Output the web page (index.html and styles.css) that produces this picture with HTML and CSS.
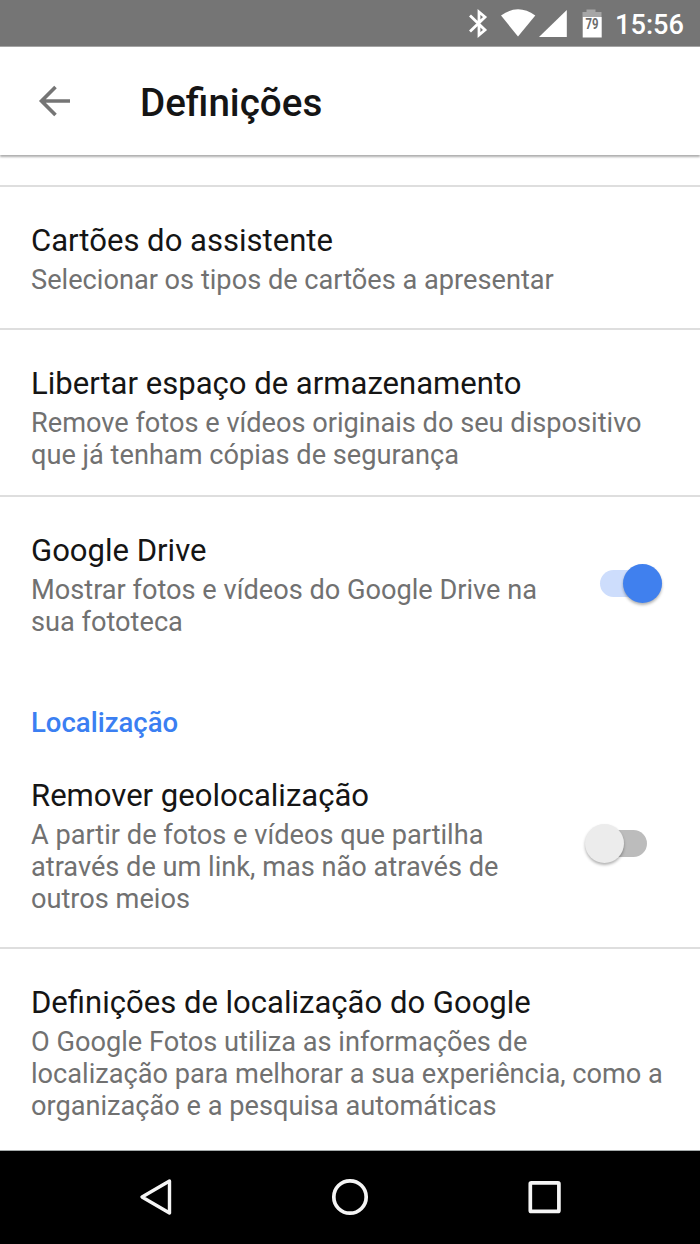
FILE: index.html
```html
<!DOCTYPE html>
<html lang="pt">
<head>
<meta charset="utf-8">
<title>Definições</title>
<link rel="stylesheet" href="styles.css">
</head>
<body>
<div class="screen">
  <div class="status-bar">
    <svg class="status-icons" viewBox="0 0 144 46" width="144" height="46">
      <path d="M3 15.500 18 30 12 35V12L18 17 3 31.500" fill="none" stroke="#fff" stroke-width="2.800"/>
      <path d="M34 15.500Q51 3 68.300 15.500L51 36.500Z" fill="#fff"/>
      <path d="M99.800 10V37H72Z" fill="#fff"/>
      <path d="M119.500 9.500h9v2.500h6v5h-19v-5h4z" fill="#a6a6a6"/>
      <path d="M115.700 17h19v20.500h-19z" fill="#fff"/>
      <text class="battery-level" x="125" y="28.500" text-anchor="middle" textLength="13" lengthAdjust="spacingAndGlyphs">79</text>
    </svg>
    <span class="clock">15:56</span>
  </div>
  <header class="toolbar">
    <svg class="back" viewBox="0 0 32 32" width="32" height="32">
      <path d="M32 16H3M17.500 2 3.500 16 17.500 30" fill="none" stroke="#757575" stroke-width="3.600"/>
    </svg>
    <h1 class="toolbar-title">Definições</h1>
  </header>
  <main class="list">
    <section class="row row-assistant">
      <div class="copy">
        <h2 class="title">Cartões do assistente</h2>
        <p class="summary">Selecionar os tipos de cartões a apresentar</p>
      </div>
    </section>
    <section class="row row-storage">
      <div class="copy">
        <h2 class="title">Libertar espaço de armazenamento</h2>
        <p class="summary">Remove fotos e vídeos originais do seu dispositivo<br>que já tenham cópias de segurança</p>
      </div>
    </section>
    <section class="row row-drive">
      <div class="copy">
        <h2 class="title">Google Drive</h2>
        <p class="summary">Mostrar fotos e vídeos do Google Drive na<br>sua fototeca</p>
      </div>
      <span class="switch on"><span class="thumb"></span></span>
    </section>
    <h3 class="category">Localização</h3>
    <section class="row row-geo">
      <div class="copy">
        <h2 class="title">Remover geolocalização</h2>
        <p class="summary">A partir de fotos e vídeos que partilha<br>através de um link, mas não através de<br>outros meios</p>
      </div>
      <span class="switch off"><span class="thumb"></span></span>
    </section>
    <section class="row row-google">
      <div class="copy">
        <h2 class="title">Definições de localização do Google</h2>
        <p class="summary">O Google Fotos utiliza as informações de<br>localização para melhorar a sua experiência, como a<br>organização e a pesquisa automáticas</p>
      </div>
    </section>
  </main>
  <nav class="nav-bar">
    <svg viewBox="0 0 36 40" width="36" height="40"><path d="M31.500 4 4 20 31.500 36Z" fill="none" stroke="#f5f5f5" stroke-width="3.400" stroke-linejoin="round"/></svg>
    <svg viewBox="0 0 40 40" width="40" height="40"><circle cx="20" cy="20" r="16.200" fill="none" stroke="#f5f5f5" stroke-width="3.700"/></svg>
    <svg viewBox="0 0 36 40" width="36" height="40"><rect x="4.300" y="5.800" width="28.600" height="28.600" rx="1" fill="none" stroke="#f5f5f5" stroke-width="3.700"/></svg>
  </nav>
</div>
</body>
</html>
```

FILE: styles.css
```css
* { box-sizing: border-box; }
body {
  margin: 0;
  background: #fff;
  font-family: Roboto, "Liberation Sans", sans-serif;
  color: #151515;
}
h1, h2, h3, p { margin: 0; }
.screen {
  display: flex;
  flex-direction: column;
  width: 700px;
  height: 1244px;
  overflow: hidden;
}
.status-bar {
  display: flex;
  flex: none;
  align-items: flex-start;
  height: 47px;
  padding-left: 467px;
  background: #757575;
  border-bottom: 1px solid #a4a4a4;
}
.status-icons { flex: none; }
.battery-level { font-size: 14px; font-weight: 700; fill: #6c6c6c; }
.clock {
  margin: 9px 0 0 4px;
  font-size: 27.200px;
  line-height: 32px;
  font-weight: 500;
  color: #fff;
}
.toolbar {
  display: flex;
  flex: none;
  align-items: center;
  height: 108px;
  padding-left: 38px;
  box-shadow: 0 1.500px 2px rgba(0, 0, 0, .32);
}
.toolbar-title {
  margin: 4px 0 0 70px;
  font-size: 38.600px;
  line-height: 46px;
  font-weight: 500;
}
.list {
  flex: none;
  height: 965px;
  margin-top: 30px;
  border-top: 2px solid #dedede;
}
.row {
  display: flex;
  justify-content: space-between;
  padding: 36px 38px 0 31px;
}
.row-assistant { height: 143px; border-bottom: 2px solid #dedede; }
.row-storage { height: 167px; border-bottom: 2px solid #dedede; }
.row-drive { height: 176px; }
.row-geo { height: 207px; border-bottom: 2px solid #dedede; }
.copy { white-space: nowrap; }
.title {
  font-size: 31.060px;
  line-height: 36px;
  font-weight: 400;
}
.summary {
  margin-top: 5px;
  font-size: 27.180px;
  line-height: 32px;
  color: #717171;
}
.category {
  height: 69px;
  padding: 34px 31px 0;
  font-size: 27.500px;
  line-height: 32px;
  font-weight: 500;
  color: #3b7ff2;
}
.switch {
  display: flex;
  flex: none;
  align-items: center;
  width: 62px;
  height: 27px;
  border-radius: 14px;
}
.on { margin-top: 37px; background: #cdddfc; justify-content: flex-end; }
.off { margin: 52px 15px 0 0; background: linear-gradient(90deg, transparent 20px, #bcbcbc 20px); }
.thumb {
  width: 39px;
  height: 39px;
  border-radius: 50%;
  background: #4080ee;
  box-shadow: 0 2px 3px rgba(0, 0, 0, .3);
}
.off .thumb { background: #ececec; }
.nav-bar {
  display: flex;
  align-items: center;
  justify-content: space-between;
  flex: none;
  height: 94px;
  padding: 0 138px 1px;
  background: #000;
  border-top: 1px solid #a5aaaa;
}
```
